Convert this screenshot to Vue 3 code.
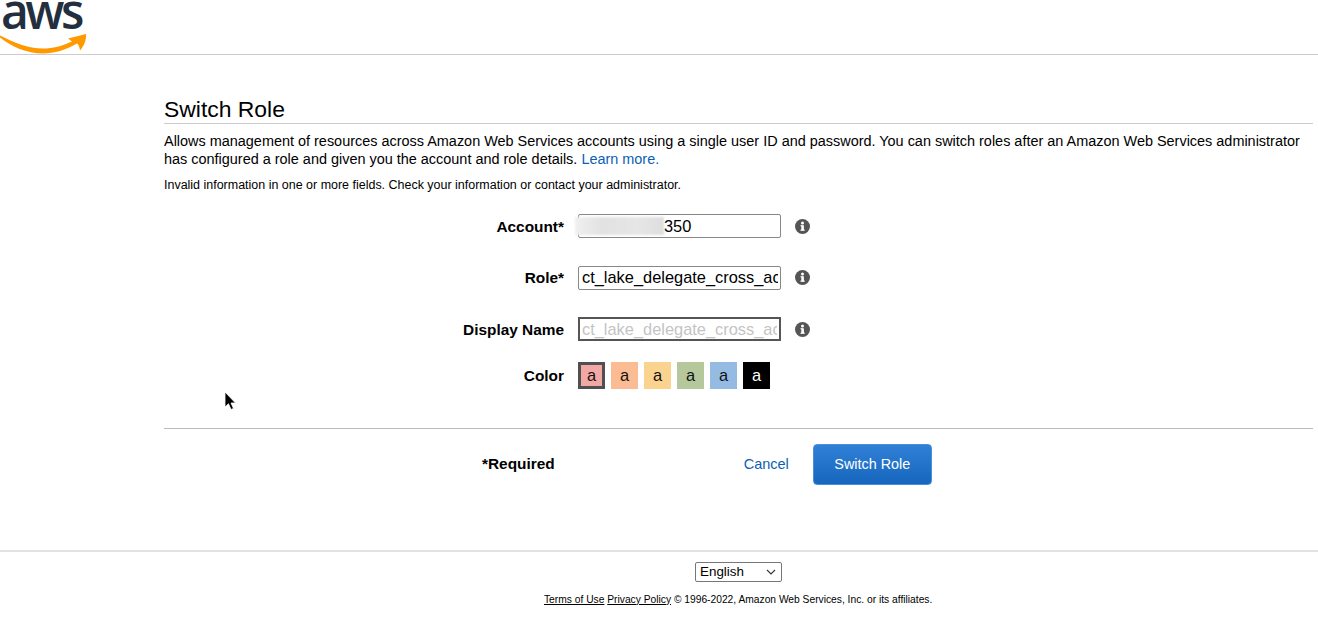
<template>
  <div class="page">
    <header class="top-bar">
      <div class="logo">
        <span class="logo-text">aws</span>
        <svg class="smile" width="88" height="24" viewBox="0 0 88 24">
          <path d="M0 4.500C14 11.500 28 17.500 43 17.500C53 17.500 62 15 72 10.500L68 7.500L86 3C86.500 9 84 15 80 19.500C79.500 16 78.500 13.500 77 12.500C66 19 54 22.500 43 22.500C27 22.500 11 15.500 0 6.500Z" fill="#ff9900" />
        </svg>
      </div>
    </header>

    <main class="content">
      <h1>Switch Role</h1>
      <p class="intro">
        Allows management of resources across Amazon Web Services accounts using a single user ID and password. You can switch roles after an Amazon Web Services administrator has configured a role and given you the account and role details.
        <a href="#">Learn more.</a>
      </p>
      <p class="error">Invalid information in one or more fields. Check your information or contact your administrator.</p>

      <form class="role-form" @submit.prevent>
        <div v-for="field in fields" :key="field.label" class="form-row">
          <label>{{ field.label }}</label>
          <div class="input-wrap">
            <input :value="field.value" :placeholder="field.placeholder" type="text" :class="{ 'focused': field.focused }" />
            <span v-if="field.blur" class="blur-mask"></span>
          </div>
          <svg class="info" width="15" height="15" viewBox="0 0 15 15">
            <circle cx="7.500" cy="7.500" r="7.500" fill="#555" />
            <rect x="6.300" y="6.300" width="2.600" height="5" fill="#fff" />
            <rect x="5.500" y="6.200" width="2" height="1.100" fill="#fff" />
            <rect x="5.500" y="10.600" width="4.200" height="1.200" fill="#fff" />
            <circle cx="7.500" cy="3.900" r="1.500" fill="#fff" />
          </svg>
        </div>

        <div class="form-row color-row">
          <label>Color</label>
          <div class="swatches">
            <span v-for="(c, i) in colors" :key="c" class="swatch" :class="{ selected: i === 0, dark: c === '#000000' }" :style="{ background: c }">a</span>
          </div>
        </div>
      </form>

      <div class="actions">
        <span class="required">*Required</span>
        <a href="#" class="cancel">Cancel</a>
        <button class="switch-btn" type="button">Switch Role</button>
      </div>
    </main>

    <footer class="page-footer">
      <div class="lang-wrap">
        <select class="lang">
          <option>English</option>
        </select>
        <svg class="lang-arrow" width="10" height="6" viewBox="0 0 10 6">
          <path d="M1 1L5 5L9 1" fill="none" stroke="#333" stroke-width="1.100" />
        </svg>
      </div>
      <div class="legal">
        <a href="#">Terms of Use</a> <a href="#">Privacy Policy</a> © 1996-2022, Amazon Web Services, Inc. or its affiliates.
      </div>
    </footer>

    <svg class="cursor" width="14" height="21" viewBox="0 0 14 21">
      <path d="M1 1V16L4.500 12.800L7 18.500L9.500 17.400L7 12H11.500Z" fill="#000" stroke="#fff" stroke-width="0.800" />
    </svg>
  </div>
</template>

<script setup>
const fields = [
  { label: 'Account*', value: '\u00a0'.repeat(18) + '350', blur: true },
  { label: 'Role*', value: 'ct_lake_delegate_cross_account' },
  { label: 'Display Name', placeholder: 'ct_lake_delegate_cross_account', focused: true }
]

const colors = ['#f2a8a4', '#fbbb93', '#fad48f', '#b4c89b', '#95bbe3', '#000000']
</script>

<style>
html, body {
  margin: 0;
  background: #fff;
}
</style>

<style scoped>
.page {
  position: relative;
  height: 628px;
  overflow: hidden;
  font-family: "Liberation Sans", Arial, sans-serif;
  color: #000;
}
.top-bar {
  height: 54px;
  border-bottom: 1px solid #ccc;
}
.logo {
  position: relative;
  width: 90px;
  height: 54px;
}
.logo-text {
  display: block;
  padding-left: 1px;
  font-family: "Open Sans", sans-serif;
  font-size: 48px;
  font-weight: 600;
  line-height: 21px;
  letter-spacing: -3.500px;
  color: #232f3e;
}
.smile {
  position: absolute;
  left: 0;
  top: 31px;
}
.content {
  padding: 42px 5px 0 164px;
}
h1 {
  margin: 0;
  padding-bottom: 1px;
  font-size: 22.900px;
  font-weight: 400;
  line-height: 25px;
  border-bottom: 1px solid #ccc;
}
.intro {
  margin: 2px 0 0;
  padding-top: 6px;
  font-size: 14.440px;
  line-height: 18px;
}
.intro a {
  color: #0b5fb5;
  text-decoration: none;
}
.error {
  margin: 8.500px 0 0;
  font-size: 12.480px;
  line-height: 16px;
}
.role-form {
  margin-top: 21.500px;
  padding-bottom: 39px;
  border-bottom: 1px solid #bbb;
}
.form-row {
  display: flex;
  align-items: center;
  height: 24px;
  margin-bottom: 27.500px;
}
.form-row label {
  width: 400px;
  margin-right: 14px;
  padding-top: 1px;
  text-align: right;
  font-size: 15.400px;
  font-weight: 700;
}
.input-wrap {
  position: relative;
  width: 203px;
  height: 24px;
}
.input-wrap input {
  box-sizing: border-box;
  width: 100%;
  height: 100%;
  padding: 0 2px 0 3px;
  border: 1px solid #888;
  border-radius: 2px;
  background: #fff;
  font-family: inherit;
  font-size: 16.400px;
  color: #000;
  outline: none;
}
.input-wrap input::placeholder {
  color: #c4c4c4;
  opacity: 1;
}
.input-wrap input.focused {
  border: 2px solid #555;
  border-radius: 0;
  padding-left: 2px;
}
.blur-mask {
  position: absolute;
  left: -3px;
  top: 3px;
  width: 89px;
  height: 18px;
  background: linear-gradient(90deg, #f0f0f0, #e2e2e2 30%, #e6e6e6 70%, #dedede);
  filter: blur(1px);
}
.info {
  margin-left: 14px;
}
.color-row {
  height: 27px;
  margin-top: -7px;
  margin-bottom: 0;
}
.swatches {
  display: flex;
  gap: 6px;
}
.swatch {
  box-sizing: border-box;
  width: 27px;
  height: 27px;
  display: flex;
  align-items: center;
  justify-content: center;
  font-size: 16.400px;
  color: #111;
}
.swatch.selected {
  border: 3px solid #505050;
}
.swatch.dark {
  color: #fff;
}
.actions {
  display: flex;
  align-items: center;
  height: 41px;
  margin-top: 15px;
}
.required {
  margin-left: 318px;
  font-size: 15.400px;
  font-weight: 700;
}
.cancel {
  margin-left: 189px;
  font-size: 14.500px;
  color: #0b5fb5;
  text-decoration: none;
}
.switch-btn {
  box-sizing: border-box;
  width: 119px;
  height: 41px;
  margin-left: 24px;
  border: 1px solid #4a90d9;
  border-radius: 4px;
  background: linear-gradient(#2f80d6, #1766bd);
  color: #fff;
  font-family: inherit;
  font-size: 14.400px;
}
.page-footer {
  margin-top: 65px;
  border-top: 2px solid #e2e2e2;
}
.lang-wrap {
  position: relative;
  width: 87px;
  height: 20px;
  margin: 10px 0 0 695px;
}
.lang {
  display: block;
  box-sizing: border-box;
  width: 100%;
  height: 100%;
  padding: 0 0 0 4px;
  border: 1px solid #777;
  border-radius: 2px;
  background: #fff;
  font-family: inherit;
  font-size: 13.400px;
  color: #000;
  appearance: none;
}
.lang-arrow {
  position: absolute;
  right: 6px;
  top: 7px;
  pointer-events: none;
}
.legal {
  margin: 10px 0 0 544px;
  font-size: 10.260px;
  line-height: 16px;
  white-space: nowrap;
}
.legal a {
  color: #000;
}
.cursor {
  position: absolute;
  left: 224px;
  top: 391px;
}
</style>
